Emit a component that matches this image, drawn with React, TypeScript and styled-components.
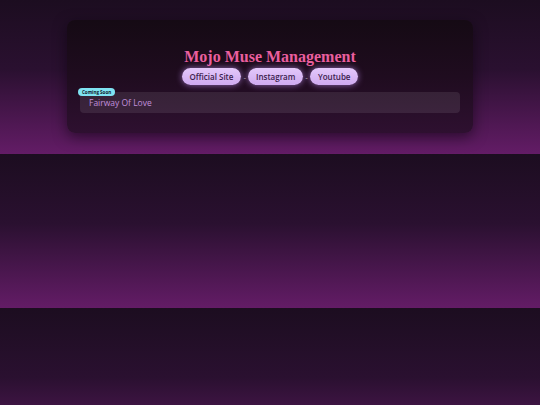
import React from "react";
import styled, { createGlobalStyle } from "styled-components";

const GlobalStyle = createGlobalStyle`
  html {
    background: linear-gradient(180deg, #1c0d20 0%, #2a1030 45%, #631c66 100%);
  }
  body {
    margin: 0;
    padding: 20px 0 21px;
    font-family: "Open Sans", "Noto Sans", sans-serif;
  }
`;

const Card = styled.div`
  width: 406px;
  margin: 0 auto;
  box-sizing: border-box;
  padding: 26px 13px 20px;
  border-radius: 8px;
  background: linear-gradient(180deg, #150a14 0%, #1f0c1f 50%, #2e1030 100%);
  box-shadow: 0 4px 14px rgba(10, 0, 12, 0.55);
  display: flex;
  flex-direction: column;
  align-items: center;
`;

const Title = styled.h1`
  margin: 0;
  font-family: "Liberation Serif", "DejaVu Serif", serif;
  font-weight: 700;
  font-size: 16px;
  line-height: 22px;
  color: #ea5f9e;
`;

const Links = styled.nav`
  display: flex;
  align-items: center;
  gap: 2px;
  height: 17px;
`;

const LinkButton = styled.a`
  display: inline-flex;
  align-items: center;
  height: 17px;
  padding: 0 8px;
  border-radius: 999px;
  background: linear-gradient(180deg, #e3c8fa 0%, #cfaaf0 100%);
  box-shadow: 0 0 6px rgba(205, 150, 255, 0.65);
  color: #3b1d4d;
  font-size: 8px;
  font-weight: 600;
  text-decoration: none;
`;

const Sep = styled.span`
  color: #b9aebf;
  font-size: 8px;
`;

const List = styled.div`
  align-self: stretch;
  margin-top: 7px;
  display: flex;
  flex-direction: column;
  gap: 6px;
`;

const Item = styled.div`
  position: relative;
  height: 21px;
  display: flex;
  align-items: center;
  padding: 0 9px;
  border-radius: 4px;
  background: rgba(255, 255, 255, 0.09);
  color: #c08fdb;
  font-size: 8.5px;
`;

const Badge = styled.span`
  position: absolute;
  left: -2px;
  top: -4px;
  height: 8px;
  padding: 0 4px;
  display: inline-flex;
  align-items: center;
  border-radius: 999px;
  background: #7fe3f2;
  color: #10202a;
  font-size: 4.5px;
  font-weight: 700;
  white-space: nowrap;
`;

const links = ["Official Site", "Instagram", "Youtube"];

export default function App() {
  return (
    <>
      <GlobalStyle />
      <Card>
        <Title>Mojo Muse Management</Title>
        <Links>
          {links.map((l, i) => (
            <React.Fragment key={l}>
              {i > 0 && <Sep>-</Sep>}
              <LinkButton href="#">{l}</LinkButton>
            </React.Fragment>
          ))}
        </Links>
        <List>
          <Item>
            <Badge>Coming Soon</Badge>
            Fairway Of Love
          </Item>
        </List>
      </Card>
    </>
  );
}
